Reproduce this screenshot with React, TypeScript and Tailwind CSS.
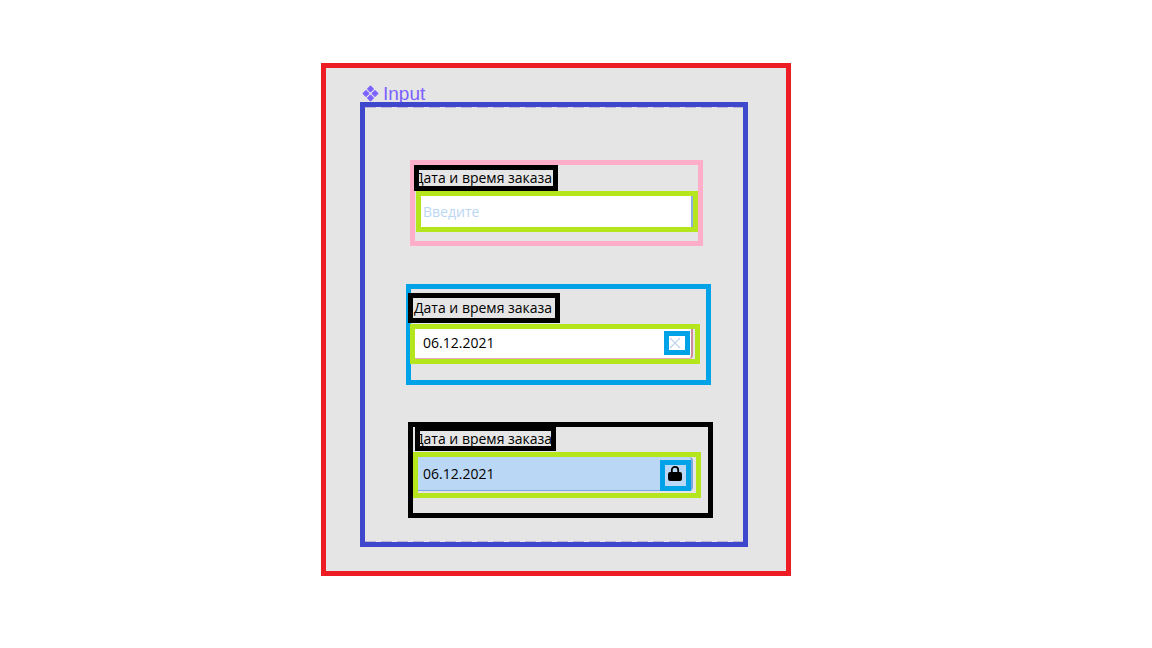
import type { ReactNode } from "react";

type FieldProps = {
  id: string;
  frame: string;
  labelBox: string;
  control: string;
  surface: string;
  value?: string;
  placeholder?: string;
  readOnly?: boolean;
  inputPadding: string;
  children?: ReactNode;
};

function Field({
  id,
  frame,
  labelBox,
  control,
  surface,
  value,
  placeholder,
  readOnly,
  inputPadding,
  children,
}: FieldProps) {
  return (
    <div className={`border-5 ${frame}`}>
      <label
        htmlFor={id}
        className={`flex items-center overflow-hidden border-5 border-black text-sm leading-4 whitespace-nowrap text-black ${labelBox}`}
      >
        <span>Дата и время заказа</span>
      </label>
      <div className={`flex border-5 border-[#b5e61d] bg-[#e5e5e5] ${control}`}>
        <div className={`flex min-w-0 flex-1 ${surface}`}>
          <input
            id={id}
            type="text"
            defaultValue={value}
            placeholder={placeholder}
            readOnly={readOnly}
            className={`min-w-0 flex-1 bg-transparent text-sm text-black outline-none placeholder:text-[#bad6f2] ${inputPadding}`}
          />
          {children}
        </div>
      </div>
    </div>
  );
}

const dashes =
  "h-px bg-[repeating-linear-gradient(90deg,#bdb6d6_0px,#bdb6d6_11px,#e8e6ee_11px,#e8e6ee_16px)]";

export default function App() {
  return (
    <main className="flex min-h-screen items-start justify-center bg-white pt-[63px] pr-10 font-[family-name:Open_Sans,sans-serif]">
      <section className="w-full max-w-[470px] border-5 border-[#ed1c24] bg-[#e5e5e5] pr-[38px] pb-6 pl-[34px]">
        <h1 className="flex h-[34px] items-end gap-1 pl-0.5 font-[family-name:Liberation_Sans,sans-serif] text-[19px] leading-4 text-[#7b61ff]">
          <svg viewBox="0 0 17 17" className="h-[17px] w-[17px]" fill="currentColor" aria-hidden="true">
            <path d="M8.5 0.8 11.6 4 8.5 7.2 5.4 4ZM8.5 9.8 11.6 13 8.5 16.2 5.4 13ZM4 5.4 7.2 8.5 4 11.6 0.8 8.5ZM13 5.4 16.2 8.5 13 11.6 9.8 8.5Z" stroke="currentColor" strokeWidth="1" strokeLinejoin="round" />
          </svg>
          <span>Input</span>
        </h1>

        <div className="relative border-5 border-[#3f48cc]">
          <div className={dashes} />
          <form className="flex flex-col pt-[52px] pb-[23px]">
            <Field
              id="order-empty"
              frame="mr-10 ml-[45px] border-[#ffaec9] pb-[9px]"
              labelBox="-ml-px h-[26px] w-36 -indent-[5px]"
              control="ml-px h-[41px]"
              surface="border-r-2 border-[#8fb0dc] bg-white"
              inputPadding="pl-0.5"
              placeholder="Введите"
            />
            <Field
              id="order-error"
              frame="mt-[38px] mr-8 ml-[41px] border-[#00a2e8] pt-1 pb-4"
              labelBox="-ml-[3px] h-[30px] w-[152px] pl-px"
              control="-ml-px mt-px mr-1.5 h-10"
              surface="mr-0.5 rounded-br-sm border-r-2 border-b border-r-[#cf8c9c] border-b-[#e3a9b6] bg-white"
              inputPadding="pb-px pl-2"
              value="06.12.2021"
            >
              <button
                type="button"
                aria-label="Очистить"
                className="mt-0.5 mr-px flex h-6 w-[26px] items-center justify-center border-5 border-[#00a2e8] bg-white pr-1"
              >
                <svg viewBox="0 0 12 12" className="h-3 w-3 shrink-0" stroke="#bfd3ee" strokeWidth="1.2" aria-hidden="true">
                  <path d="M1 1 11 11M11 1 1 11" />
                </svg>
              </button>
            </Field>
            <Field
              id="order-locked"
              frame="mt-[37px] mr-[30px] ml-[43px] border-black pb-[15px]"
              labelBox="-mt-px ml-0.5 h-[25px] w-[141px] -indent-[6px]"
              control="mt-px mr-[7px] h-[46px]"
              surface="mr-[3px] mb-0.5 rounded-r-sm border-r-2 border-b border-[#7da7dc] bg-[#bad7f5]"
              inputPadding="pl-[5px]"
              value="06.12.2021"
              readOnly
            >
              <span className="mt-[3px] -mb-px flex w-[31px] items-start border-5 border-[#00a2e8] pt-px pl-[3px]">
                <svg viewBox="0 0 14 15" className="h-[15px] w-3.5" aria-hidden="true">
                  <path d="M3.8 7V4.1a3.2 3.2 0 0 1 6.4 0V7" fill="none" stroke="#000" strokeWidth="1.8" />
                  <rect x="0" y="6" width="14" height="9" rx="2.2" fill="#000" />
                </svg>
              </span>
            </Field>
          </form>
          <div className={dashes} />
        </div>
      </section>
    </main>
  );
}
